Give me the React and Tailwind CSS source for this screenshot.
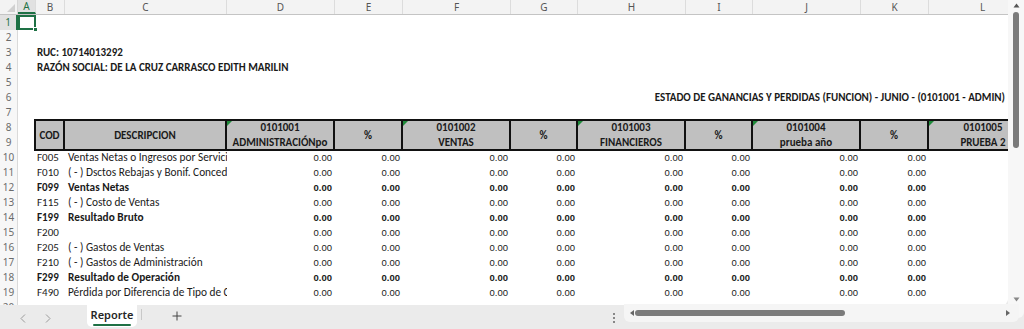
import React from "react";

const CAL = "font-['Carlito','Liberation_Sans_Narrow','Liberation_Sans',sans-serif]";
const ARI = "font-['Liberation_Sans',Arial,sans-serif]";
const UI = "font-['Noto_Sans','Open_Sans',sans-serif]";

const COLS = [
  { l: "A", w: "w-[18px]" },
  { l: "B", w: "w-[29px]" },
  { l: "C", w: "w-[162px]" },
  { l: "D", w: "w-[108px]" },
  { l: "E", w: "w-[68px]" },
  { l: "F", w: "w-[108px]" },
  { l: "G", w: "w-[67px]" },
  { l: "H", w: "w-[108px]" },
  { l: "I", w: "w-[67px]" },
  { l: "J", w: "w-[108px]" },
  { l: "K", w: "w-[68px]" },
  { l: "L", w: "w-[108px]" },
];

const DATA = [
  [10, "F005", "Ventas Netas o Ingresos por Servicios", false],
  [11, "F010", "( - ) Dsctos Rebajas y Bonif. Concedidas", false],
  [12, "F099", "Ventas Netas", true],
  [13, "F115", "( - ) Costo de Ventas", false],
  [14, "F199", "Resultado Bruto", true],
  [15, "F200", "", false],
  [16, "F205", "( - ) Gastos de Ventas", false],
  [17, "F210", "( - ) Gastos de Administración", false],
  [18, "F299", "Resultado de Operación", true],
  [19, "F490", "Pérdida por Diferencia de Tipo de Cambio", false],
];

function RowNum({ n, sel }) {
  return (
    <div
      className={
        "w-[18px] h-[15px] shrink-0 text-center leading-[15px] text-[10px] " +
        UI +
        (sel
          ? " bg-[#e1e1e1] text-[#1e7145] border-r-2 border-[#1e7145]"
          : " bg-[#f7f7f7] text-[#6b6b6b] border-r border-[#dadada]")
      }
    >
      {n}
    </div>
  );
}

function Row({ n, children, sel }) {
  return (
    <div className="flex h-[15px] shrink-0">
      <RowNum n={n} sel={sel} />
      {children}
    </div>
  );
}

function Tri() {
  return (
    <div className="absolute left-0 top-0 w-0 h-0 border-t-[5px] border-t-[#1f8a3a] border-r-[5px] border-r-transparent" />
  );
}

function HeadCell({ w, top, bottom, single, tri, last }) {
  return (
    <div
      className={
        w +
        " relative shrink-0 h-full flex flex-col items-center justify-center bg-[#c0c0c0] font-bold text-[11px] leading-[15px] text-[#1a1a1a] whitespace-nowrap " +
        CAL +
        (last ? "" : " border-r-2 border-[#111]")
      }
    >
      {tri && <Tri />}
      {single ? (
        <span>{single}</span>
      ) : (
        <>
          <span>{top}</span>
          <span>{bottom}</span>
        </>
      )}
    </div>
  );
}

function Num({ w, bold, empty }) {
  return (
    <div
      className={
        w +
        " shrink-0 text-right pr-[3px] leading-[15px] text-[#1a1a1a] text-[9.5px] " +
        ARI +
        (bold ? " font-bold" : "")
      }
    >
      {empty ? "" : "0.00"}
    </div>
  );
}

export default function App() {
  return (
    <div className="w-[1024px] h-[329px] overflow-hidden bg-[#ebebeb] flex flex-col">
      <div className="flex h-[305px] shrink-0">
        {/* sheet */}
        <div className="w-[1008px] h-full bg-white overflow-hidden rounded-br-[6px] flex flex-col">
          {/* column headers */}
          <div className={"flex h-[15px] shrink-0 bg-[#f3f3f3] border-b border-[#c4c4c4] text-[10px] text-[#555] " + UI}>
            <div className="w-[18px] shrink-0 relative border-r border-[#d6d6d6]">
              <div className="absolute right-[2px] bottom-[2px] w-0 h-0 border-b-[8px] border-b-[#d0d0d0] border-l-[8px] border-l-transparent" />
            </div>
            {COLS.map((c, i) => (
              <div
                key={c.l}
                className={
                  c.w +
                  " shrink-0 flex items-center justify-center leading-[15px] border-r border-[#dcdcdc]" +
                  (i === 0 ? " bg-[#e1e1e1] text-[#1e7145] border-b-2 border-b-[#1e7145]" : "")
                }
              >
                {c.l}
              </div>
            ))}
          </div>

          {/* row 1 */}
          <Row n={1} sel>
            <div className="w-[18px] h-[15px] shrink-0 relative border-2 border-[#1e7145]">
              <div className="absolute -right-[4px] -bottom-[4px] w-[5px] h-[5px] bg-[#1e7145] border border-white" />
            </div>
          </Row>
          <Row n={2} />
          <Row n={3}>
            <div className="w-[18px] shrink-0" />
            <div className={"pl-[1px] leading-[15px] font-bold text-[11px] text-[#1a1a1a] whitespace-nowrap " + CAL}>
              RUC: 10714013292
            </div>
          </Row>
          <Row n={4}>
            <div className="w-[18px] shrink-0" />
            <div className={"pl-[1px] leading-[15px] font-bold text-[11px] text-[#1a1a1a] whitespace-nowrap " + CAL}>
              RAZÓN SOCIAL: DE LA CRUZ CARRASCO EDITH MARILIN
            </div>
          </Row>
          <Row n={5} />
          <Row n={6}>
            <div className={"flex-1 flex justify-end pr-[3px] leading-[15px] font-bold text-[11px] text-[#1a1a1a] whitespace-nowrap " + CAL}>
              ESTADO DE GANANCIAS Y PERDIDAS (FUNCION) - JUNIO - (0101001 - ADMIN)
            </div>
          </Row>
          <Row n={7} />

          {/* rows 8-9 header */}
          <div className="flex h-[30px] shrink-0">
            <div className="flex flex-col">
              <RowNum n={8} />
              <RowNum n={9} />
            </div>
            <div className="w-[16px] shrink-0" />
            <div className="flex h-[32px] -mt-[1px] border-y-2 border-l-2 border-[#111]">
              <HeadCell w="w-[29px]" single="COD" />
              <HeadCell w="w-[162px]" single="DESCRIPCION" />
              <HeadCell w="w-[108px]" top="0101001" bottom="ADMINISTRACIÓNpo" tri />
              <HeadCell w="w-[68px]" single="%" />
              <HeadCell w="w-[108px]" top="0101002" bottom="VENTAS" tri />
              <HeadCell w="w-[67px]" single="%" />
              <HeadCell w="w-[108px]" top="0101003" bottom="FINANCIEROS" tri />
              <HeadCell w="w-[67px]" single="%" />
              <HeadCell w="w-[108px]" top="0101004" bottom="prueba año" tri />
              <HeadCell w="w-[68px]" single="%" />
              <HeadCell w="w-[108px]" top="0101005" bottom="PRUEBA 2" tri last />
            </div>
          </div>

          {DATA.map(([n, code, desc, bold]) => (
            <Row key={n} n={n}>
              <div className="w-[18px] shrink-0" />
              <div
                className={
                  "w-[29px] shrink-0 pl-[1px] leading-[15px] text-[11px] text-[#1a1a1a] whitespace-nowrap overflow-hidden " +
                  CAL +
                  (bold ? " font-bold" : "")
                }
              >
                {code}
              </div>
              <div
                className={
                  "w-[162px] shrink-0 pl-[3px] leading-[15px] text-[11.3px] text-[#1a1a1a] whitespace-nowrap overflow-hidden " +
                  CAL +
                  (bold ? " font-bold" : "")
                }
              >
                {desc}
              </div>
              <Num w="w-[108px]" bold={bold} />
              <Num w="w-[68px]" bold={bold} />
              <Num w="w-[108px]" bold={bold} />
              <Num w="w-[67px]" bold={bold} />
              <Num w="w-[108px]" bold={bold} />
              <Num w="w-[67px]" bold={bold} />
              <Num w="w-[108px]" bold={bold} />
              <Num w="w-[68px]" bold={bold} />
              <Num w="w-[108px]" empty />
            </Row>
          ))}
          <Row n={20} />
        </div>

        {/* vertical scrollbar */}
        <div className="w-[16px] h-[318px] shrink-0 bg-[#f7f7f7] rounded-b-[6px] flex flex-col items-center">
          <svg width="7" height="5" viewBox="0 0 7 5" className="mt-[3px]">
            <path d="M3.5 0.5 L6.5 4.5 L0.5 4.5 Z" fill="#555" />
          </svg>
          <div className="w-[6px] h-[136px] mt-[4px] rounded-full bg-[#7b7b7b]" />
          <div className="flex-1" />
          <svg width="7" height="5" viewBox="0 0 7 5" className="mb-[16px]">
            <path d="M0.5 0.5 L6.5 0.5 L3.5 4.5 Z" fill="#888" />
          </svg>
        </div>
      </div>

      {/* bottom bar */}
      <div className={"flex items-start h-[24px] shrink-0 " + UI}>
        <svg width="6" height="9" viewBox="0 0 6 9" className="ml-[20px] mt-[9px]">
          <path d="M5 0.5 L1 4.5 L5 8.5" fill="none" stroke="#9a9a9a" strokeWidth="1" />
        </svg>
        <svg width="6" height="9" viewBox="0 0 6 9" className="ml-[19px] mt-[9px]">
          <path d="M1 0.5 L5 4.5 L1 8.5" fill="none" stroke="#9a9a9a" strokeWidth="1" />
        </svg>
        <div className="ml-[36px] w-[50px] h-[22px] bg-white rounded-b-[5px] flex flex-col items-center pt-[3px]">
          <span className="text-[11px] leading-[14px] font-semibold text-[#262626]">Reporte</span>
          <div className="w-[38px] h-[2px] bg-[#1e7145] mt-[2px] rounded-full" />
        </div>
        <div className="ml-[4px] mt-[4px] w-px h-[11px] bg-[#c8c8c8]" />
        <svg width="10" height="10" viewBox="0 0 10 10" className="ml-[30px] mt-[6px]">
          <path d="M5 0.5 V9.5 M0.5 5 H9.5" stroke="#444" strokeWidth="1" />
        </svg>
        <div className="ml-[431px] mt-[8px] flex flex-col gap-[2px]">
          <div className="w-[2px] h-[2px] bg-[#666] rounded-full" />
          <div className="w-[2px] h-[2px] bg-[#666] rounded-full" />
          <div className="w-[2px] h-[2px] bg-[#666] rounded-full" />
        </div>
        <div className="ml-[9px] w-[395px] h-[18px] bg-[#f5f5f5] rounded-b-[6px] flex items-center -mt-[1px]">
          <svg width="4" height="6" viewBox="0 0 4 6" className="ml-[6px]">
            <path d="M4 0 L0 3 L4 6 Z" fill="#666" />
          </svg>
          <div className="ml-[1px] w-[210px] h-[6px] rounded-full bg-[#7b7b7b]" />
          <div className="flex-1" />
          <svg width="4" height="6" viewBox="0 0 4 6" className="mr-[9px]">
            <path d="M0 0 L4 3 L0 6 Z" fill="#666" />
          </svg>
        </div>
      </div>
    </div>
  );
}
